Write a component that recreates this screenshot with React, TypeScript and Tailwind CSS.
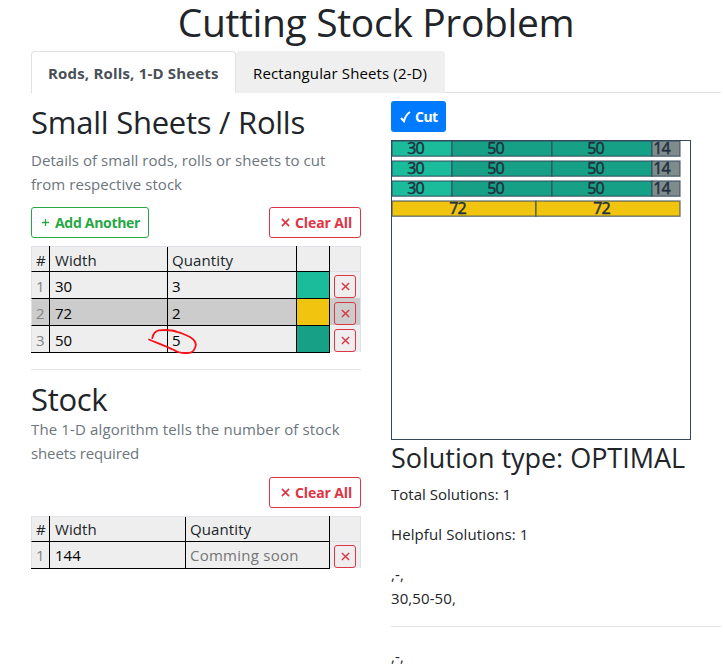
import React from "react";

const FONT = "font-['Open_Sans','Noto_Sans',sans-serif]";

function Cross({ className }: { className: string }) {
  return (
    <svg viewBox="0 0 10 10" className={className} fill="none" stroke="currentColor">
      <path d="M1 1L9 9M9 1L1 9" />
    </svg>
  );
}

function ClearAll() {
  return (
    <button className="flex h-[31px] w-[92px] items-center rounded-[3px] border border-[#dc3545] pl-[11px] text-[14px] font-bold text-[#dc3545]">
      <Cross className="mr-[5px] size-[9px] stroke-[1.8]" />
      <span className="whitespace-nowrap tracking-[-0.1px]">Clear All</span>
    </button>
  );
}

function Remove() {
  return (
    <button className="mt-[3px] ml-[4px] flex h-[23px] w-[22px] shrink-0 items-center justify-center rounded-[3px] border border-[#dc3545] text-[#dc3545]">
      <Cross className="size-[9px] stroke-[1.6]" />
    </button>
  );
}

const items = [
  { w: 30, q: 3, color: "bg-[#1abc9c]", row: "bg-[#eeeeee]" },
  { w: 72, q: 2, color: "bg-[#f1c40f]", row: "bg-[#cccccc]" },
  { w: 50, q: 5, color: "bg-[#16a085]", row: "bg-[#eeeeee]" },
];

const G = "#16a085";
const bars = [
  ...[0, 1, 2].flatMap((r) => [
    { x: 0, w: 60, y: r * 20, t: "30", tx: 24, c: "#1abc9c" },
    { x: 60, w: 100, y: r * 20, t: "50", tx: 104, c: G },
    { x: 160, w: 100, y: r * 20, t: "50", tx: 204, c: G },
    { x: 260, w: 28, y: r * 20, t: "14", tx: 270, c: "#7f8c8d" },
  ]),
  { x: 0, w: 144, y: 60, t: "72", tx: 66, c: "#f1c40f" },
  { x: 144, w: 144, y: 60, t: "72", tx: 210, c: "#f1c40f" },
];

function CutChart() {
  return (
    <svg width="300" height="300" className="mt-2 block overflow-visible border border-[#34495e]">
      {bars.map((b, i) => (
        <g key={i}>
          <rect x={b.x} y={b.y} width={b.w} height="15.2" fill={b.c} stroke="#34495e" strokeOpacity="0.75" strokeWidth="1.3" />
          <text x={b.tx} y={b.y + 13} textAnchor="middle" fontSize="16" fill="#22303f" stroke="#22303f" strokeWidth="0.5" textLength="17.5">
            {b.t}
          </text>
        </g>
      ))}
    </svg>
  );
}

export default function App() {
  return (
    <div className={`h-[666px] w-[723px] overflow-hidden bg-white pl-[31px] text-[16px] leading-[24px] text-[#212529] ${FONT}`}>
      <h1 className="h-[51px] w-[690px] whitespace-nowrap text-center text-[39px] leading-[43px] tracking-[-0.35px]">Cutting Stock Problem</h1>

      <div className="flex h-[42px] w-[690px] border-b border-[#dee2e6]">
        <div className="h-[42px] w-[205px] rounded-t-[4px] border border-b-0 border-[#dee2e6] bg-white pl-4 pt-[9px] text-[15px] font-bold whitespace-nowrap tracking-[0.18px] text-[#495057]">Rods, Rolls, 1-D Sheets</div>
        <div className="h-[42px] w-[209px] rounded-t-[4px] bg-[#efefef] pl-[17px] pt-[10px] text-[15px] whitespace-nowrap tracking-[0.13px] text-black">Rectangular Sheets (2-D)</div>
      </div>

      <div className="flex gap-[30px]">
        <div className="w-[330px]">
          <h2 className="mt-[10px] h-[45px] whitespace-nowrap text-[31px] leading-[38px] tracking-[-0.25px]">Small Sheets / Rolls</h2>
          <p className="h-[59px] whitespace-nowrap text-[15px] tracking-[0.05px] text-[#6c757d]">Details of small rods, rolls or sheets to cut<br />from respective stock</p>
          <div className="flex h-[39px] justify-between">
            <button className="flex h-[31px] w-[118px] items-center rounded-[3px] border border-[#28a745] pl-[9px] text-[14px] font-bold whitespace-nowrap tracking-[-0.3px] text-[#28a745]">
              <svg viewBox="0 0 9 9" className="mr-[5px] size-[9px] stroke-[1.3]" stroke="currentColor"><path d="M4.5 1V8M1 4.5H8" /></svg>
              Add Another
            </button>
            <ClearAll />
          </div>

          <div className="relative">
            <div className="flex h-[25px] border border-b-0 border-[#dee2e6] bg-[#eeeeee] text-[15px] tracking-[0.1px]">
              <div className="w-[17px] pl-1 pt-px">#</div>
              <div className="-mt-px w-[118px] border-l border-black pl-[5px] pt-[2px]">Width</div>
              <div className="w-[129px] border-l border-black pl-1 pt-px">Quantity</div>
              <div className="-mt-px w-[34px] border-x border-black" />
            </div>
            {items.map((it, i) => (
              <div key={i} className={`flex h-[27px] border-r border-[#dee2e6] text-[15px] text-black ${it.row}`}>
                <div className="w-[18px] border-t border-l border-t-black border-l-[#dee2e6] pl-[4px] pt-[2px] text-[#808386]">{i + 1}</div>
                <div className="w-[118px] border-t border-l border-black pl-[5px] pt-[2px]">{it.w}</div>
                <div className="w-[129px] border-t border-l border-black pl-1 pt-[2px]">{it.q}</div>
                <div className={`w-[34px] border-x border-t border-black ${it.color}`} />
                <div className={`w-[30px] border-t ${i === 0 ? "border-[#dee2e6]" : "border-transparent"}`}><Remove /></div>
              </div>
            ))}
            <div className="h-px w-[299px] bg-black" />
            <svg className="absolute left-[115px] top-[80px] h-[32px] w-[56px]" fill="none" stroke="#f5121a" strokeWidth="1.8" strokeLinecap="round" strokeLinejoin="round">
              <path d="M6.3 12C7 8 9 5 13 4.3C19 3.8 27 4.2 31 5.8C36 7 40 9 44 11C49 14 51 18 49 22C47 27 45 27 39 27C34 27 31 26 28 24C22 21 14 18 3 13.5" />
            </svg>
          </div>

          <hr className="mt-4 border-[#e2e3e4]" />
          <h2 className="mt-[10px] h-[37px] text-[31px] leading-[38px] tracking-[-0.3px]">Stock</h2>
          <p className="h-[60px] whitespace-nowrap text-[15px] tracking-[-0.13px] text-[#6c757d]"><span className="tracking-[0.13px]">The 1-D algorithm tells the number of stock</span><br />sheets required</p>
          <div className="flex h-[39px] justify-end"><ClearAll /></div>
          <div>
            <div className="flex h-[25px] border border-b-0 border-[#dee2e6] bg-[#eeeeee] text-[15px] tracking-[0.1px]">
              <div className="w-[17px] pl-1">#</div>
              <div className="-mt-px w-[136px] border-l border-black pl-[5px] pt-px">Width</div>
              <div className="w-[144px] border-l border-black pl-1">Quantity</div>
              <div className="-mt-px w-px bg-black" />
            </div>
            <div className="flex h-[27px] border-r border-[#dee2e6] bg-[#eeeeee] text-[15px] text-black">
              <div className="w-[18px] border-t border-l border-t-black border-l-[#dee2e6] pl-[4px] pt-px text-[#808386]">1</div>
              <div className="w-[136px] border-t border-l border-black pl-[5px] pt-px">144</div>
              <div className="w-[145px] border-x border-t border-black pl-1 pt-px whitespace-nowrap tracking-[0.25px] text-[#757575]">Comming soon</div>
              <div className="w-[30px] border-t border-[#dee2e6]"><Remove /></div>
            </div>
            <div className="h-px w-[299px] bg-black" />
          </div>
        </div>

        <div className="w-[330px] pt-2">
          <button className="flex h-[31px] w-[55px] items-center rounded-[3px] bg-[#007bff] pl-[9px] text-[14px] font-bold tracking-[-0.5px] text-white">
            <svg viewBox="0 0 11 12" className="mr-[4px] h-[12px] w-[11px]" fill="none" stroke="currentColor" strokeWidth="2"><path d="M1 7L4 10.2C5 6 7 3 10 1" /></svg>
            Cut
          </button>
          <CutChart />
          <h3 className="h-[42px] whitespace-nowrap text-[27px] leading-[36px] tracking-[-0.03px]">Solution type: OPTIMAL</h3>
          <p className="h-[40px] text-[15px] tracking-[0.02px]">Total Solutions: 1</p>
          <p className="h-[40px] text-[15px] tracking-[0.1px]">Helpful Solutions: 1</p>
          <p className="h-[64px] text-[15px] tracking-[0.1px]">,-,<br />30,50-50,</p>
          <hr className="border-[#e2e3e4]" />
          <p className="mt-[17px] text-[15px] tracking-[0.1px]">,-,</p>
        </div>
      </div>
    </div>
  );
}
